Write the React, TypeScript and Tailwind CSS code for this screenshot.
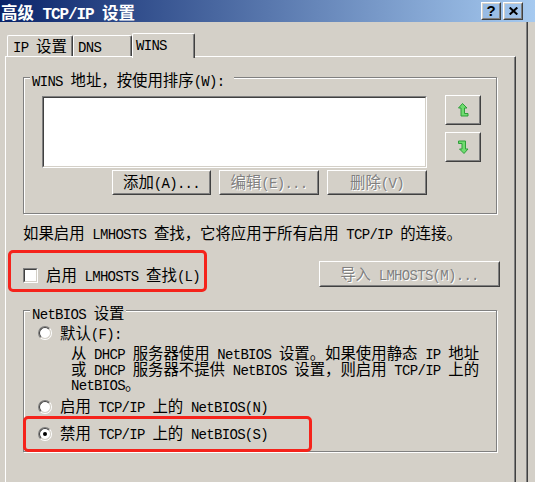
import React from "react";

const LAT = "font-['Liberation_Mono',monospace] text-[14px] tracking-[-0.7px]";
const LAT_TITLE = "font-['Liberation_Mono',monospace] text-[16px] tracking-[-1.1px] font-bold";

function T({ s, lat = LAT }: { s: string; lat?: string }) {
  const parts = s.split(/([\x20-\x7e]+)/).filter((p) => p.length > 0);
  return (
    <span>
      {parts.map((p, i) =>
        /^[\x20-\x7e]+$/.test(p) ? (
          <span key={i} className={lat}>
            {p}
          </span>
        ) : (
          <span key={i}>{p}</span>
        )
      )}
    </span>
  );
}

function Btn({
  size,
  children,
}: {
  size: string;
  children?: React.ReactNode;
}) {
  return (
    <div
      className={`${size} shrink-0 border border-t-white border-l-white border-r-[#404040] border-b-[#404040]`}
    >
      <div className="h-full w-full border border-t-[#d4d0c8] border-l-[#d4d0c8] border-r-[#808080] border-b-[#808080] flex items-center justify-center whitespace-nowrap leading-[18px]">
        {children}
      </div>
    </div>
  );
}

function Radio({ on }: { on?: boolean }) {
  return (
    <div className="w-[14px] h-[14px] shrink-0 rounded-full border border-t-[#808080] border-l-[#808080] border-r-white border-b-white">
      <div className="w-full h-full rounded-full border border-t-[#404040] border-l-[#404040] border-r-[#d4d0c8] border-b-[#d4d0c8] bg-white flex items-center justify-center">
        {on && <div className="w-[4px] h-[4px] rounded-full bg-black" />}
      </div>
    </div>
  );
}

function UpIcon() {
  return (
    <svg width="11" height="14" viewBox="0 0 11 14">
      <path
        d="M4.5 0.5 L9 5 L6.5 5 L6.5 10.5 L10 10.5 L10 13 L3 13 L3 5 L0.5 5 Z"
        fill="#6fdc6f"
        stroke="#2f9e3a"
        strokeWidth="1"
      />
    </svg>
  );
}

function DownIcon() {
  return (
    <svg width="11" height="14" viewBox="0 0 11 14">
      <path
        d="M6 13.5 L1.5 9 L4 9 L4 3.5 L0.5 3.5 L0.5 1 L7.5 1 L7.5 9 L10 9 Z"
        fill="#6fdc6f"
        stroke="#2f9e3a"
        strokeWidth="1"
      />
    </svg>
  );
}

export default function App() {
  return (
    <div className="w-[535px] h-[482px] overflow-hidden bg-[#d4d0c8] text-black font-['Noto_Sans_CJK_SC',sans-serif] text-[15.4px]">
      {/* Title bar */}
      <div className="h-[22px] flex items-start bg-[linear-gradient(to_right,#0a246a,#a6caf0)]">
        <div className="pl-[1px] pt-[2px] text-white font-bold text-[16.5px] leading-[20px] whitespace-nowrap">
          <T s="高级 TCP/IP 设置" lat={LAT_TITLE} />
        </div>
        <div className="ml-auto mt-[2px] flex gap-[2px] pr-[12px]">
          <Btn size="w-[20px] h-[18px]">
            <span className="font-['Liberation_Sans',sans-serif] font-bold text-[15px] leading-[14px]">?</span>
          </Btn>
          <Btn size="w-[20px] h-[18px]">
            <svg width="9" height="8" viewBox="0 0 9 8">
              <path d="M0.7 0.5 L8.3 7.5 M8.3 0.5 L0.7 7.5" stroke="#000" strokeWidth="2" />
            </svg>
          </Btn>
        </div>
      </div>

      {/* Body */}
      <div className="w-[528px] h-[460px] border-r border-r-[#404040]">
        <div className="h-full border-r border-r-[#808080]">
          {/* Tabs */}
          <div className="h-[34px] flex items-end pl-[7px] leading-[18px] whitespace-nowrap">
            <div className="w-[66px] h-[21px] rounded-t-[2px] border-t border-l border-r border-t-white border-l-white border-r-[#404040] shadow-[inset_-1px_0_0_#808080] pl-[5px] flex items-center">
              <T s="IP 设置" />
            </div>
            <div className="w-[59px] h-[21px] rounded-t-[2px] border-t border-l border-r border-t-white border-l-white border-r-[#404040] shadow-[inset_-1px_0_0_#808080] pl-[4px] flex items-center">
              <T s="DNS" />
            </div>
            <div className="relative z-10 -mb-[2px] w-[63px] h-[25px] bg-[#d4d0c8] rounded-t-[2px] border-t border-l border-r border-t-white border-l-white border-r-[#404040] shadow-[inset_-1px_0_0_#808080] pl-[3px] pb-[4px] flex items-center">
              <T s="WINS" />
            </div>
          </div>

          {/* Panel */}
          <div className="ml-[5px] w-[511px] h-[430px] border-t border-l border-r border-t-white border-l-white border-r-[#404040]">
            <div className="h-full border-r border-r-[#808080] flex flex-col">
              {/* WINS group */}
              <div className="ml-[17px] mt-[20px] w-[474px] h-[137px] shrink-0 border border-[#808080] shadow-[inset_1px_1px_0_#fff,1px_1px_0_#fff]">
                <div className="-mt-[8px] ml-[6px] w-fit h-[18px] bg-[#d4d0c8] pl-[2px] pr-[10px] leading-[18px] whitespace-nowrap">
                  <T s="WINS 地址，按使用排序(W):" />
                </div>
                <div className="mt-[7px] ml-[18px] flex items-start">
                  <div className="mt-[1px] w-[385px] h-[72px] border border-t-[#808080] border-l-[#808080] border-r-white border-b-white">
                    <div className="h-full border border-t-[#404040] border-l-[#404040] border-r-[#d4d0c8] border-b-[#d4d0c8] bg-white" />
                  </div>
                  <div className="ml-[18px] flex flex-col gap-[7px]">
                    <Btn size="w-[36px] h-[30px]">
                      <UpIcon />
                    </Btn>
                    <Btn size="w-[36px] h-[30px]">
                      <DownIcon />
                    </Btn>
                  </div>
                </div>
                <div className="mt-[2px] ml-[88px] flex gap-[8px]">
                  <Btn size="w-[99px] h-[25px]">
                    <T s="添加(A)..." />
                  </Btn>
                  <Btn size="w-[100px] h-[25px]">
                    <span className="text-[#808080] [text-shadow:1px_1px_0_#fff]">
                      <T s="编辑(E)..." />
                    </span>
                  </Btn>
                  <Btn size="w-[100px] h-[25px]">
                    <span className="text-[#808080] [text-shadow:1px_1px_0_#fff]">
                      <T s="删除(V)" />
                    </span>
                  </Btn>
                </div>
              </div>

              {/* LMHOSTS text */}
              <div className="ml-[17px] mt-[9px] h-[18px] leading-[18px] whitespace-nowrap">
                <T s="如果启用 LMHOSTS 查找，它将应用于所有启用 TCP/IP 的连接。" />
              </div>

              {/* Checkbox row */}
              <div className="mt-[9px] flex items-start">
                <div className="ml-[2px] w-[199px] h-[42px] border-[3px] border-[#f5231b] rounded-[5px] pl-[12px] pt-[8px] flex items-center gap-[8px]">
                  <div className="w-[15px] h-[15px] shrink-0 border border-t-[#808080] border-l-[#808080] border-r-white border-b-white">
                    <div className="h-full border border-t-[#404040] border-l-[#404040] border-r-[#d4d0c8] border-b-[#d4d0c8] bg-white" />
                  </div>
                  <div className="leading-[18px] whitespace-nowrap">
                    <T s="启用 LMHOSTS 查找(L)" />
                  </div>
                </div>
                <div className="ml-[112px] mt-[11px]">
                  <Btn size="w-[181px] h-[26px]">
                    <span className="text-[#808080] [text-shadow:1px_1px_0_#fff]">
                      <T s="导入 LMHOSTS(M)..." />
                    </span>
                  </Btn>
                </div>
              </div>

              {/* NetBIOS group */}
              <div className="ml-[17px] mt-[18px] w-[474px] h-[142px] shrink-0 border border-[#808080] shadow-[inset_1px_1px_0_#fff,1px_1px_0_#fff]">
                <div className="-mt-[8px] ml-[6px] w-fit h-[18px] bg-[#d4d0c8] px-[2px] leading-[18px] whitespace-nowrap">
                  <T s="NetBIOS 设置" />
                </div>
                <div className="mt-[3px] ml-[14px] h-[18px] flex items-center gap-[8px] leading-[18px] whitespace-nowrap">
                  <Radio />
                  <div>
                    <T s="默认(F):" />
                  </div>
                </div>
                <div className="mt-[3px] ml-[47px] whitespace-nowrap leading-[15.5px]">
                  <div className="h-[15.5px]">
                    <T s="从 DHCP 服务器使用 NetBIOS 设置。如果使用静态 IP 地址" />
                  </div>
                  <div className="h-[15.5px]">
                    <T s="或 DHCP 服务器不提供 NetBIOS 设置，则启用 TCP/IP 上的" />
                  </div>
                  <div className="h-[15.5px]">
                    <T s="NetBIOS。" />
                  </div>
                </div>
                <div className="mt-[6px] ml-[14px] h-[18px] flex items-center gap-[8px] leading-[18px] whitespace-nowrap">
                  <Radio />
                  <div>
                    <T s="启用 TCP/IP 上的 NetBIOS(N)" />
                  </div>
                </div>
                <div className="-ml-[1px] w-[289px] h-[36px] border-[3px] border-[#f5231b] rounded-[5px] pl-[12px] flex items-center gap-[8px] leading-[18px] whitespace-nowrap">
                  <Radio on />
                  <div>
                    <T s="禁用 TCP/IP 上的 NetBIOS(S)" />
                  </div>
                </div>
              </div>
            </div>
          </div>
        </div>
      </div>
    </div>
  );
}
